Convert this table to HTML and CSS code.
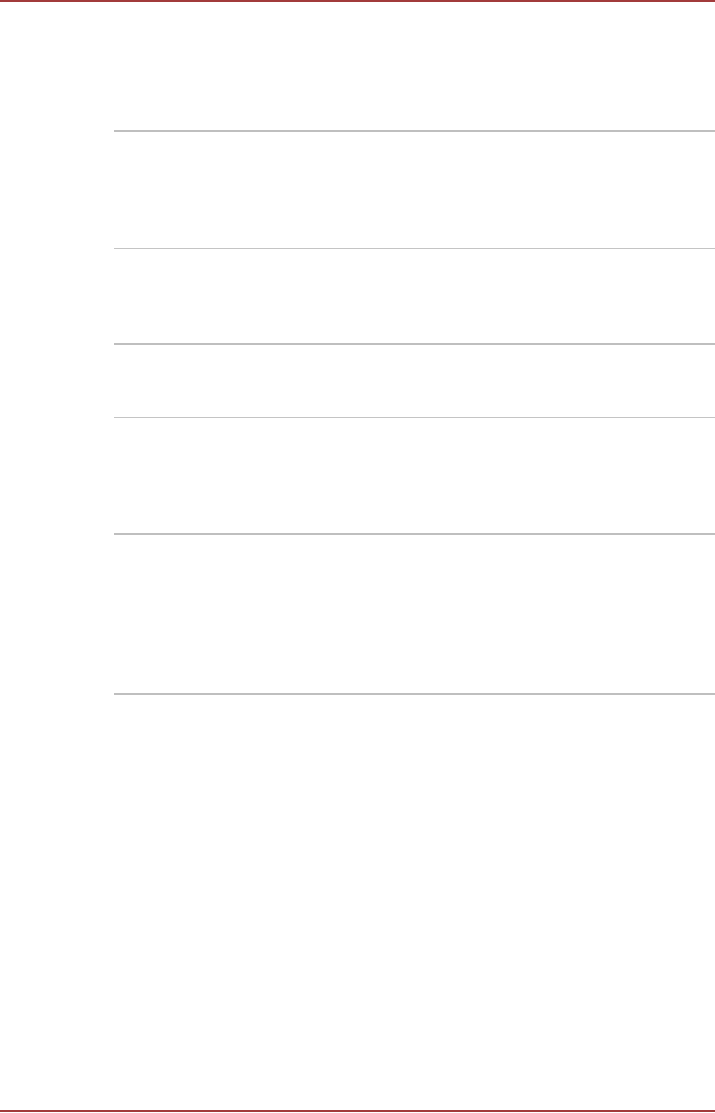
FILE: index.html
```html
<!DOCTYPE html>
<html lang="en">

<head>
    <meta charset="UTF-8">
    <meta name="viewport" content="width=device-width, initial-scale=1.0">
    <title>Page</title>
    <link rel="stylesheet" href="styles.css">
</head>

<body>
    <div class="page">
        <div class="page-top"></div>
        <div class="table">
            <div class="row row-1 thick"></div>
            <div class="row row-2 thin"></div>
            <div class="row row-3 thick"></div>
            <div class="row row-4 thin"></div>
            <div class="row row-5 thick last"></div>
        </div>
        <div class="page-bottom"></div>
    </div>
</body>

</html>
```

FILE: styles.css
```css
html,
body {
    margin: 0;
    padding: 0;
    background: #ffffff;
    font-family: "Liberation Sans", Arial, sans-serif;
}

.page {
    height: 1113px;
    display: flex;
    flex-direction: column;
    box-sizing: border-box;
}

.page-top {
    height: 2px;
    background-color: #a23b3b;
}

.table {
    margin-top: 128px;
    padding-left: 114px;
}

.row {
    box-sizing: border-box;
    border-top: 1px solid #c4c4c4;
}

.row.thick {
    border-top: 2px solid #bfbfbf;
}

.row.last {
    border-bottom: 2px solid #bfbfbf;
}

.row-1 {
    height: 118px;
}

.row-2 {
    height: 95px;
}

.row-3 {
    height: 74px;
}

.row-4 {
    height: 116px;
}

.row-5 {
    height: 162px;
}

.page-bottom {
    margin-top: auto;
    margin-bottom: 1px;
    height: 2px;
    background-color: #a23b3b;
}
```
